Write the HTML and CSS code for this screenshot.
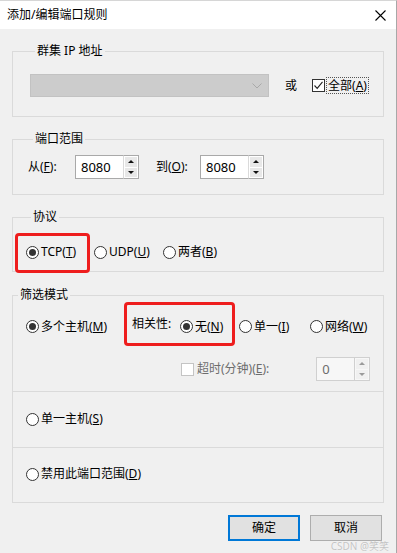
FILE: index.html
```html
<!DOCTYPE html>
<html lang="zh-CN">
<head>
  <meta charset="UTF-8" />
  <title>添加/编辑端口规则</title>
  <link rel="stylesheet" href="styles.css">
</head>
<body>
  <div class="window">
    <div class="titlebar">
      <span class="title">添加/编辑端口规则</span>
      <svg class="close" width="11" height="11" viewBox="0 0 11 11">
        <path d="M0.5 0.5 L10.5 10.5 M10.5 0.5 L0.5 10.5" stroke="#000" stroke-width="1.1" fill="none"/>
      </svg>
    </div>

    <div class="content">
      <fieldset class="group cluster">
        <legend>群集 IP 地址</legend>
        <div class="row">
          <div class="combo">
            <svg width="10" height="6" viewBox="0 0 10 6"><path d="M0.5 0.5 L5 5 L9.5 0.5" stroke="#a9a9a9" fill="none"/></svg>
          </div>
          <span class="txt or">或</span>
          <span class="check">
            <span class="box"><svg width="11" height="11" viewBox="0 0 11 11"><path d="M1.5 5.5 L4.2 8.3 L9.5 1.8" stroke="#222" stroke-width="1.1" fill="none"/></svg></span>
            <span class="focus">全部(<u>A</u>)</span>
          </span>
        </div>
      </fieldset>

      <fieldset class="group ports">
        <legend>端口范围</legend>
        <div class="row">
          <span class="txt from">从(<u>F</u>):</span>
          <span class="edit">8080</span>
          <span class="spin"><span class="up"></span><span class="down"></span></span>
          <span class="txt to">到(<u>O</u>):</span>
          <span class="edit">8080</span>
          <span class="spin"><span class="up"></span><span class="down"></span></span>
        </div>
      </fieldset>

      <fieldset class="group protocol">
        <legend>协议</legend>
        <div class="row">
          <span class="radio mark tcp-mark"><span class="dot on"></span><span class="txt">TCP(<u>T</u>)</span></span>
          <span class="radio"><span class="dot"></span><span class="txt">UDP(<u>U</u>)</span></span>
          <span class="radio"><span class="dot"></span><span class="txt">两者(<u>B</u>)</span></span>
        </div>
      </fieldset>

      <fieldset class="group filter">
        <legend>筛选模式</legend>
        <div class="section first">
          <div class="row">
            <span class="radio multi"><span class="dot on"></span><span class="txt">多个主机(<u>M</u>)</span></span>
            <span class="mark aff-mark">
              <span class="txt aff">相关性:</span>
              <span class="radio none"><span class="dot on"></span><span class="txt">无(<u>N</u>)</span></span>
            </span>
            <span class="radio single"><span class="dot"></span><span class="txt">单一(<u>I</u>)</span></span>
            <span class="radio net"><span class="dot"></span><span class="txt">网络(<u>W</u>)</span></span>
          </div>
          <div class="row timeout">
            <span class="box disabled"></span>
            <span class="txt dim">超时(分钟)(<u>E</u>):</span>
            <span class="edit off">0</span>
            <span class="spin off"><span class="up"></span><span class="down"></span></span>
          </div>
        </div>
        <div class="section middle">
          <span class="radio"><span class="dot"></span><span class="txt">单一主机(<u>S</u>)</span></span>
        </div>
        <div class="section last">
          <span class="radio"><span class="dot"></span><span class="txt">禁用此端口范围(<u>D</u>)</span></span>
        </div>
      </fieldset>

      <div class="buttons">
        <button class="btn default">确定</button>
        <button class="btn">取消</button>
      </div>
    </div>

    <span class="watermark">CSDN @笑笑</span>
  </div>
</body>
</html>
```

FILE: styles.css
```css
body {
  margin: 0;
  background: #f0f0f0;
  font: 12px/16px "Noto Sans", "Noto Sans CJK SC", sans-serif;
  color: #000;
}
.window {
  position: relative;
  width: 397px;
  height: 553px;
  box-sizing: border-box;
  border-top: 1px solid #d6d6d6;
  border-right: 1px solid #a8a8a8;
  background: #f0f0f0;
  overflow: hidden;
}
.titlebar {
  height: 28px;
  background: #fff;
  display: flex;
  align-items: center;
  justify-content: space-between;
  padding: 0 10px 0 7px;
}
.title {
  height: 16px;
}
.content {
  padding: 14px 12px 0 12px;
}
.txt {
  display: block;
  height: 16px;
  white-space: nowrap;
}
.group {
  margin: 0;
  padding: 0;
  min-width: 0;
  border: 1px solid #dadada;
}
.group legend {
  margin-left: 5px;
  padding: 0 2px;
  height: 16px;
  line-height: 16px;
}
.row {
  display: flex;
  align-items: center;
}

/* 群集 IP */
.cluster {
  padding: 15px 0 19px 17px;
}
.combo {
  width: 239px;
  height: 23px;
  box-sizing: border-box;
  background: #cccccc;
  border: 1px solid #c2c2c2;
  display: flex;
  align-items: center;
  justify-content: flex-end;
  padding-right: 6px;
}
.or {
  margin-left: 16px;
}
.check {
  display: flex;
  align-items: center;
  margin-left: 15px;
}
.box {
  width: 13px;
  height: 13px;
  box-sizing: border-box;
  border: 1px solid #333;
  background: #fff;
  display: flex;
  align-items: center;
  justify-content: center;
}
.box.disabled {
  border-color: #c4c4c4;
}
.focus {
  margin-left: 1px;
  padding: 0 1px;
  height: 15px;
  line-height: 15px;
  border: 1px dotted #555;
  white-space: nowrap;
}

/* 端口范围 */
.ports {
  margin-top: 14px;
  padding: 8px 0 15px 15px;
}
.txt.from {
  width: 47px;
}
.txt.to {
  width: 44px;
  margin-left: 17px;
}
.edit {
  width: 48px;
  height: 24px;
  box-sizing: border-box;
  background: #fff;
  border: 1px solid #a9a9a9;
  border-right: none;
  padding-left: 5px;
  display: flex;
  align-items: center;
  font-size: 13px;
}
.edit.off {
  width: 38px;
  background: #f7f7f7;
  border-color: #d0d0d0;
  color: #6d6d6d;
}
.spin {
  width: 16px;
  height: 24px;
  box-sizing: border-box;
  border: 1px solid #a9a9a9;
  border-left: 1px solid #dadada;
  background: #fff;
  display: flex;
  flex-direction: column;
  padding: 1px;
  gap: 1px;
}
.spin.off {
  border-color: #d0d0d0;
  background: #f7f7f7;
}
.up, .down {
  flex: 1;
  background: #e8e8e8;
  display: flex;
  align-items: center;
  justify-content: center;
}
.spin.off .up, .spin.off .down {
  background: #f0f0f0;
}
.up::after {
  content: "";
  border-left: 3px solid transparent;
  border-right: 3px solid transparent;
  border-bottom: 3px solid #111;
}
.down::after {
  content: "";
  border-left: 3px solid transparent;
  border-right: 3px solid transparent;
  border-top: 3px solid #111;
}
.spin.off .up::after { border-bottom-color: #9a9a9a; }
.spin.off .down::after { border-top-color: #9a9a9a; }

/* radios */
.radio {
  display: flex;
  align-items: center;
  height: 16px;
}
.dot {
  flex: none;
  width: 13px;
  height: 13px;
  margin-right: 2px;
  box-sizing: border-box;
  border: 1px solid #333;
  border-radius: 50%;
  background: #fff;
  display: flex;
  align-items: center;
  justify-content: center;
}
.dot.on::after {
  content: "";
  width: 7px;
  height: 7px;
  border-radius: 50%;
  background: #333;
}
.mark {
  position: relative;
}
.mark::after {
  content: "";
  position: absolute;
  border: 3px solid #ee1d1d;
  border-radius: 4px;
}

/* 协议 */
.protocol {
  margin-top: 14px;
  padding: 19px 0 11px 13px;
}
.protocol .radio {
  width: 68px;
}
.protocol .radio + .radio {
  width: 69px;
}
.tcp-mark::after {
  top: -11px;
  bottom: -13px;
  left: -11px;
  right: 4px;
}

/* 筛选模式 */
.filter {
  margin-top: 15px;
  padding: 0;
}
.section {
  padding: 0 13px;
  border-top: 1px solid #dadada;
}
.section.first {
  border-top: none;
  padding-top: 13px;
  padding-bottom: 10px;
}
.section.middle {
  padding-top: 19px;
  padding-bottom: 20px;
}
.section.last {
  padding-top: 18px;
  padding-bottom: 20px;
}
.multi {
  width: 106px;
}
.aff-mark {
  display: flex;
  align-items: center;
}
.aff-mark::after {
  top: -14px;
  bottom: -9px;
  left: -8px;
  right: 4px;
}
.aff {
  width: 48px;
  margin-bottom: 5px;
}
.radio.none {
  width: 59px;
}
.radio.single {
  width: 71px;
}
.timeout {
  margin-top: 20px;
  padding-left: 155px;
}
.dim {
  color: #6d6d6d;
  margin-left: 3px;
  width: 120px;
}

/* buttons */
.buttons {
  display: flex;
  justify-content: flex-end;
  gap: 10px;
  margin-top: 12px;
  padding-right: 2px;
}
.btn {
  width: 72px;
  height: 26px;
  box-sizing: border-box;
  background: #e1e1e1;
  border: 1px solid #adadad;
  font: inherit;
  color: #000;
  padding: 0;
}
.btn.default {
  border: 2px solid #0078d7;
}
.watermark {
  position: absolute;
  right: 7px;
  bottom: 1px;
  font: 10px/12px "Noto Sans", "Noto Sans CJK SC", sans-serif;
  color: #c4c4c4;
  text-shadow: 0 0 1px #fff;
}
```
